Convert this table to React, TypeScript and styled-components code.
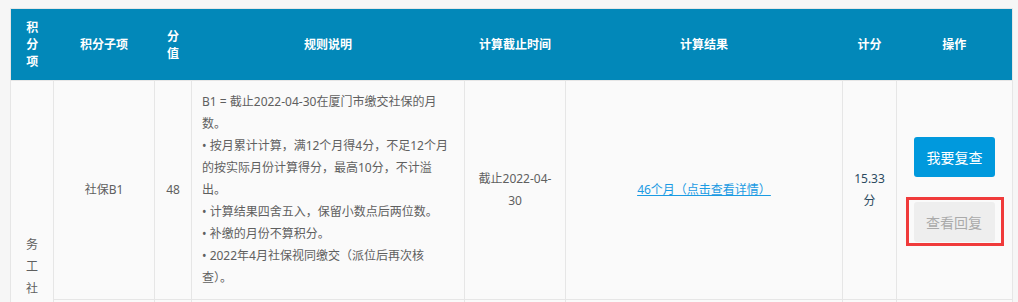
import React from "react";
import styled, { createGlobalStyle } from "styled-components";

const GlobalStyle = createGlobalStyle`
  html, body {
    margin: 0;
    padding: 0;
    background: #f6f6f6;
    overflow: hidden;
  }
  body {
    font-family: "Noto Sans", "Noto Sans CJK SC", sans-serif;
  }
`;

const Page = styled.div`
  padding: 8px 6px 0 10px;
`;

const Table = styled.table`
  width: 1002px;
  table-layout: fixed;
  border-collapse: collapse;
  background: #fafafa;
  border: 1px solid #e6e6e6;
`;

const HeadCell = styled.th`
  background: #0288b9;
  color: #ffffff;
  font-size: 12px;
  font-weight: 700;
  line-height: 17px;
  padding: 10px;
  text-align: center;
  vertical-align: middle;
  height: 51px;
`;

const Cell = styled.td<{ $align?: "left" | "center"; $valign?: "top" | "middle" }>`
  border: 1px solid #e6e6e6;
  padding: 10px;
  font-size: 12px;
  line-height: 22px;
  color: #5f5f5f;
  text-align: ${(p) => p.$align ?? "center"};
  vertical-align: ${(p) => p.$valign ?? "middle"};
  word-break: normal;
`;

const CategoryCell = styled(Cell)`
  padding-top: 153px;
`;

const Score = styled.span`
  color: #2c4a60;
`;

const RuleLine = styled.div`
  white-space: nowrap;
`;

const DetailLink = styled.a`
  color: #1a9be3;
  text-decoration: underline;
  cursor: pointer;
`;

const Actions = styled.div`
  display: flex;
  flex-direction: column;
  align-items: center;
  gap: 20px;
  padding-top: 3px;
`;

const Button = styled.button<{ $variant: "primary" | "muted" }>`
  width: 81px;
  height: 40px;
  border: none;
  border-radius: 3px;
  font-family: "Noto Sans", "Noto Sans CJK SC", sans-serif;
  font-size: 14px;
  padding: 0;
  cursor: pointer;
  background: ${(p) => (p.$variant === "primary" ? "#0099dd" : "#eeeeee")};
  color: ${(p) => (p.$variant === "primary" ? "#ffffff" : "#aaaaaa")};
`;

const Highlight = styled.div`
  border: 3px solid #f03b3b;
  padding: 2px 6px 1px 5px;
  line-height: 0;
`;

const SpacerRow = styled.tr`
  height: 60px;
`;

const columns = [43, 101, 37, 273, 101, 277, 54, 116];

const rules = [
  ["B1 = 截止2022-04-30在厦门市缴交社保的月", "数。"],
  ["• 按月累计计算，满12个月得4分，不足12个月", "的按实际月份计算得分，最高10分，不计溢", "出。"],
  ["• 计算结果四舍五入，保留小数点后两位数。"],
  ["• 补缴的月份不算积分。"],
  ["• 2022年4月社保视同缴交（派位后再次核", "查）。"],
];

export default function App() {
  return (
    <>
      <GlobalStyle />
      <Page>
        <Table>
          <colgroup>
            {columns.map((w, i) => (
              <col key={i} style={{ width: w }} />
            ))}
          </colgroup>
          <thead>
            <tr>
              <HeadCell>积分项</HeadCell>
              <HeadCell>积分子项</HeadCell>
              <HeadCell>分值</HeadCell>
              <HeadCell>规则说明</HeadCell>
              <HeadCell>计算截止时间</HeadCell>
              <HeadCell>计算结果</HeadCell>
              <HeadCell>计分</HeadCell>
              <HeadCell>操作</HeadCell>
            </tr>
          </thead>
          <tbody>
            <tr>
              <CategoryCell rowSpan={2} $valign="top">
                务工社保
              </CategoryCell>
              <Cell>社保B1</Cell>
              <Cell>48</Cell>
              <Cell $align="left">
                {rules.map((group, gi) =>
                  group.map((line, li) => <RuleLine key={`${gi}-${li}`}>{line}</RuleLine>)
                )}
              </Cell>
              <Cell>
                截止2022-04-<wbr />30
              </Cell>
              <Cell>
                <DetailLink>46个月（点击查看详情）</DetailLink>
              </Cell>
              <Cell>
                <Score>15.33 分</Score>
              </Cell>
              <Cell>
                <Actions>
                  <Button $variant="primary">我要复查</Button>
                  <Highlight>
                    <Button $variant="muted">查看回复</Button>
                  </Highlight>
                </Actions>
              </Cell>
            </tr>
            <SpacerRow>
              <Cell />
              <Cell />
              <Cell />
              <Cell />
              <Cell />
              <Cell />
              <Cell />
            </SpacerRow>
          </tbody>
        </Table>
      </Page>
    </>
  );
}
